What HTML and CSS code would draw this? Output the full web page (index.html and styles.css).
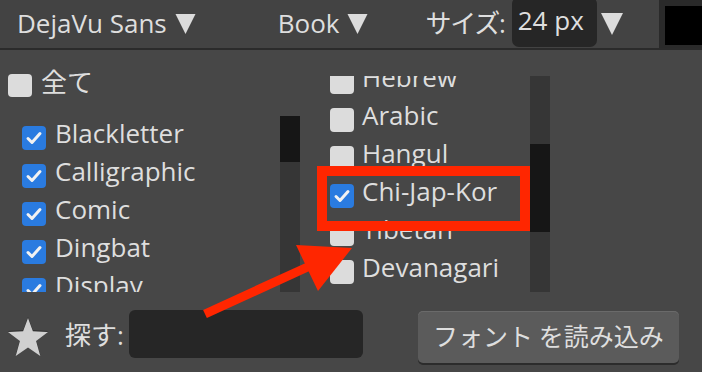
FILE: index.html
```html
<!DOCTYPE html>
<html lang="ja">
<head>
<meta charset="utf-8">
<link rel="stylesheet" href="styles.css">
</head>
<body>
<div class="app">
  <header class="topbar">
    <span class="tb-item tb-family">DejaVu Sans</span>
    <svg class="tri tri-1" viewBox="0 0 20 20"><polygon points="0,0 20,0 10,20"/></svg>
    <span class="tb-item tb-style">Book</span>
    <svg class="tri tri-2" viewBox="0 0 20 20"><polygon points="0,0 20,0 10,20"/></svg>
    <span class="tb-item tb-size-label">サイズ:</span>
    <span class="size-box">24 px</span>
    <svg class="tri tri-3" viewBox="0 0 20 20"><polygon points="0,0 20,0 10,20"/></svg>
    <span class="color-cell"><span class="swatch"></span></span>
  </header>

  <main class="main">
    <section class="left">
      <div class="all-row">
        <span class="cb"></span>
        <span class="label">全て</span>
      </div>
      <div class="pane pane-left">
        <div class="list">
          <div class="list-inner inner-left">
            <div class="row"><span class="cb on"><svg viewBox="0 0 24 24"><path d="M6 12.5 L10 16.5 L18 7.5"/></svg></span><span class="label">Blackletter</span></div>
            <div class="row"><span class="cb on"><svg viewBox="0 0 24 24"><path d="M6 12.5 L10 16.5 L18 7.5"/></svg></span><span class="label">Calligraphic</span></div>
            <div class="row"><span class="cb on"><svg viewBox="0 0 24 24"><path d="M6 12.5 L10 16.5 L18 7.5"/></svg></span><span class="label">Comic</span></div>
            <div class="row"><span class="cb on"><svg viewBox="0 0 24 24"><path d="M6 12.5 L10 16.5 L18 7.5"/></svg></span><span class="label">Dingbat</span></div>
            <div class="row"><span class="cb on"><svg viewBox="0 0 24 24"><path d="M6 12.5 L10 16.5 L18 7.5"/></svg></span><span class="label">Display</span></div>
          </div>
        </div>
        <div class="scrollbar sb-left"><div class="thumb"></div></div>
      </div>
    </section>

    <section class="right">
      <div class="pane pane-right">
        <div class="list">
          <div class="list-inner inner-right">
            <div class="row"><span class="cb"></span><span class="label">Hebrew</span></div>
            <div class="row"><span class="cb"></span><span class="label">Arabic</span></div>
            <div class="row"><span class="cb"></span><span class="label">Hangul</span></div>
            <div class="row"><span class="cb on"><svg viewBox="0 0 24 24"><path d="M6 12.5 L10 16.5 L18 7.5"/></svg></span><span class="label">Chi-Jap-Kor</span></div>
            <div class="row"><span class="cb"></span><span class="label">Tibetan</span></div>
            <div class="row"><span class="cb"></span><span class="label">Devanagari</span></div>
          </div>
        </div>
        <div class="scrollbar sb-right"><div class="thumb"></div></div>
      </div>
    </section>
  </main>

  <footer class="bottom">
    <svg class="star" viewBox="0 0 40 40"><polygon points="20,0 24.9,13.3 40,14 28.1,23 32.3,38 20,29.5 7.7,38 11.9,23 0,14 15.1,13.3"/></svg>
    <span class="search-label">探す:</span>
    <span class="search-box"></span>
    <button class="load-btn">フォント を読み込み</button>
  </footer>

  <div class="highlight"></div>
  <svg class="arrow" viewBox="0 0 702 372">
    <line x1="205" y1="314" x2="312" y2="265"/>
    <polygon points="296,245 352,248 318,291"/>
  </svg>
</div>
</body>
</html>
```

FILE: styles.css
```css
* { box-sizing: border-box; }
html, body { margin: 0; padding: 0; }
body {
  width: 702px;
  height: 372px;
  overflow: hidden;
  background: #474747;
  font-family: "Open Sans", "Noto Sans CJK JP", sans-serif;
  font-size: 26px;
  color: #dedede;
}
.app { position: relative; width: 702px; height: 372px; }

.topbar {
  height: 50px;
  background: #434343;
  border-bottom: 2px solid #2b2b2b;
  display: flex;
  align-items: center;
}
.tb-item { line-height: 48px; white-space: nowrap; margin-top: -2px; }
.tb-family { margin-left: 17px; }
.tri { width: 21px; height: 20px; fill: #dcdcdc; flex: none; }
.tri-1 { margin-left: 8px; }
.tb-style { margin-left: 82px; }
.tri-2 { margin-left: 8px; }
.tb-size-label { margin-left: 57px; letter-spacing: -1.2px; }
.size-box {
  margin-left: 7px;
  width: 85px;
  height: 50px;
  margin-top: -4px;
  background: #262626;
  border-radius: 7px;
  padding-left: 6px;
  line-height: 46px;
  white-space: nowrap;
}
.tri-3 { margin-left: 4px; width: 22px; height: 22px; }
.color-cell {
  margin-left: 36px;
  flex: 1;
  align-self: stretch;
  background: #2a2a2a;
  padding: 6px 0 3px 6px;
  display: flex;
}
.swatch { flex: 1; background: #000; }

.main { display: flex; height: 250px; }
.left { width: 300px; padding-left: 8px; display: flex; flex-direction: column; }
.all-row { display: flex; align-items: center; margin-top: 22px; height: 24px; }
.all-row .cb { width: 24px; height: 23px; margin-top: 2px; }
.all-row .label { margin-left: 9px; line-height: 24px; margin-top: -5px; }

.pane { display: flex; }
.pane-left { margin-left: 14px; margin-top: 20px; height: 176px; }
.pane-left .list { width: 258px; }
.right { margin-left: 30px; }
.pane-right { margin-top: 26px; height: 216px; }
.pane-right .list { width: 200px; }

.list { overflow: hidden; height: 100%; }
.inner-left { margin-top: -2px; }
.inner-right { margin-top: -18px; }
.row { display: flex; height: 38px; }
.row .cb { margin-top: 12px; }
.row .label { line-height: 38px; margin-left: 9px; white-space: nowrap; }
.inner-right .row .label { margin-left: 8px; }

.cb {
  width: 24px;
  height: 24px;
  border-radius: 4px;
  background: #dcdcdc;
  flex: none;
  display: inline-block;
}
.cb.on { background: #2a7be0; }
.cb svg { display: block; width: 24px; height: 24px; fill: none; stroke: #f2f2f2; stroke-width: 3; stroke-linecap: round; stroke-linejoin: round; }

.scrollbar { width: 20px; height: 100%; background: #363636; position: relative; }
.sb-left .thumb { height: 46px; background: #161616; }
.sb-right .thumb { height: 88px; margin-top: 68px; background: #161616; }

.bottom { display: flex; align-items: flex-start; height: 72px; }
.star { width: 40px; height: 40px; margin-left: 8px; margin-top: 18px; fill: #d0d0d0; flex: none; filter: drop-shadow(0 -1px 0 #2a2a2a); }
.search-label { margin-left: 17px; margin-top: 17px; line-height: 36px; }
.search-box { margin-left: 5px; margin-top: 10px; width: 234px; height: 48px; background: #262626; border-radius: 6px; }
.load-btn {
  margin-left: 55px;
  margin-top: 11px;
  width: 261px;
  height: 52px;
  background: #5b5b5b;
  border: none;
  border-radius: 5px;
  box-shadow: inset 0 1px 0 #6a6a6a, 0 2px 0 #2c2c2c;
  color: #dedede;
  font-family: "Noto Sans CJK JP", sans-serif;
  font-size: 25px;
  padding: 0 0 4px 0;
  white-space: nowrap;
}

.highlight {
  position: absolute;
  left: 317px;
  top: 166px;
  width: 213px;
  height: 65px;
  border: 10px solid #ff2600;
}
.arrow { position: absolute; left: 0; top: 0; width: 702px; height: 372px; pointer-events: none; }
.arrow line { stroke: #ff2600; stroke-width: 9; }
.arrow polygon { fill: #ff2600; }
```
